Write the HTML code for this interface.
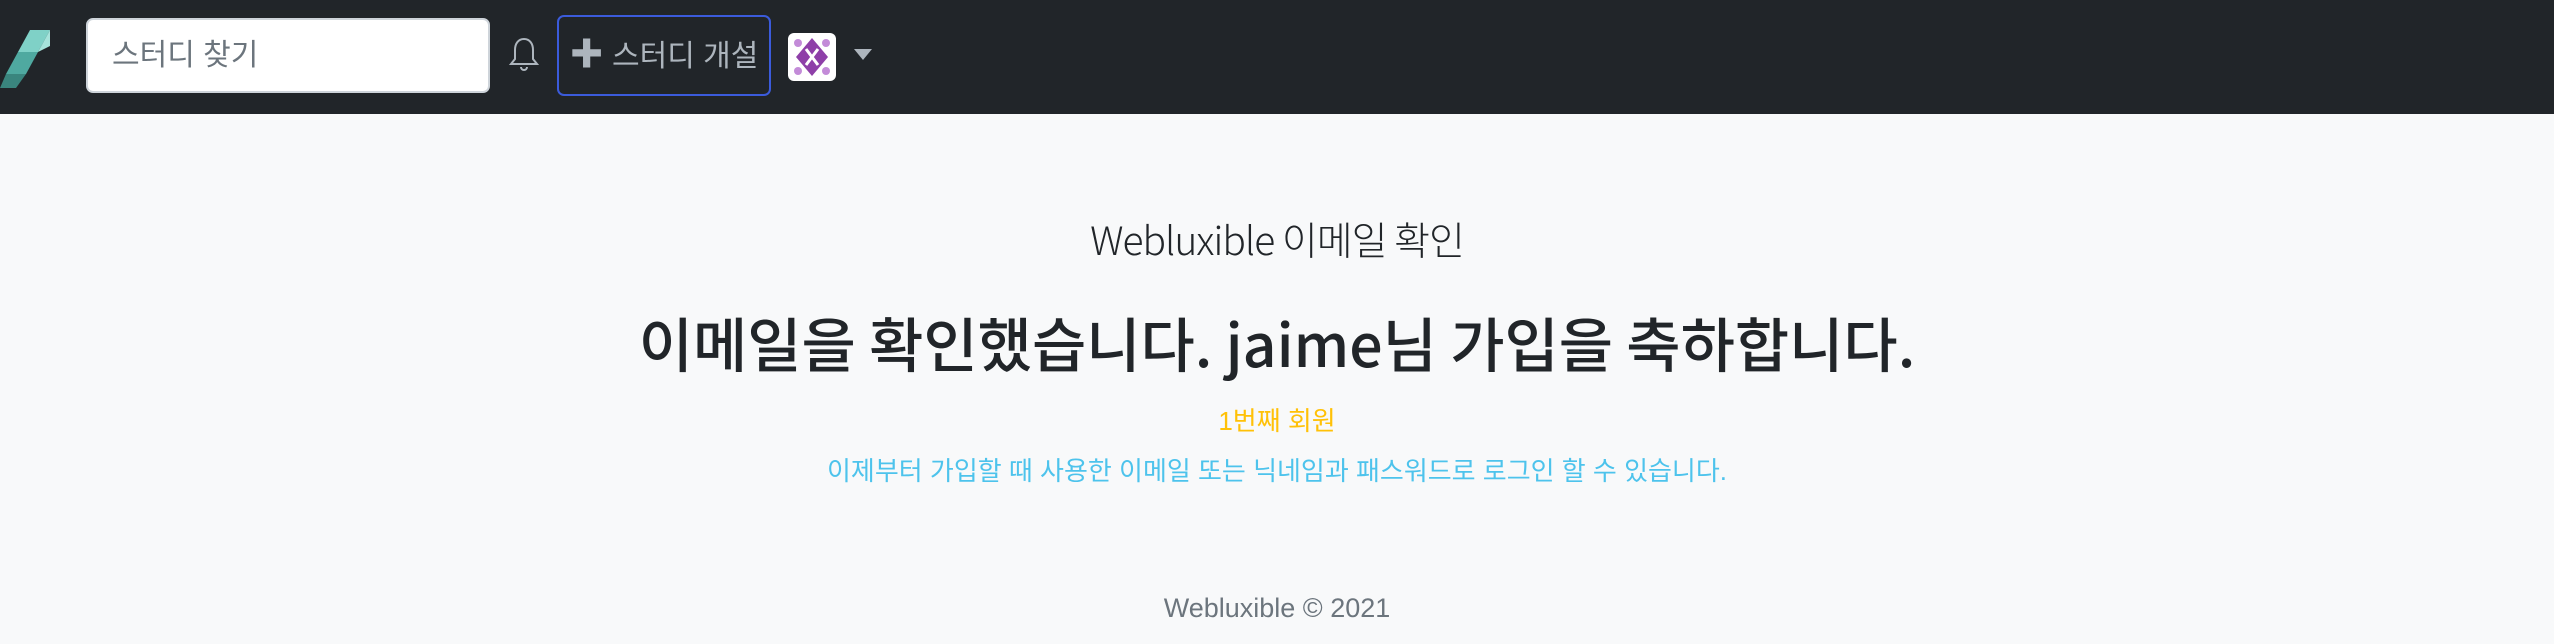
<!DOCTYPE html>
<html><head><meta charset="utf-8"><style>
body{margin:0;width:2554px;height:644px;background:#f8f9fa;font-family:"Liberation Sans","Noto Sans CJK KR",sans-serif;overflow:hidden;position:relative}
.nav{position:absolute;left:0;top:0;width:2554px;height:114px;background:#212529}
.inp{position:absolute;left:86px;top:18px;width:404px;height:75px;background:#fff;border:2px solid #ced4da;border-radius:7px;box-sizing:border-box;font-size:30px;color:#6c757d;line-height:71px;padding-left:24px}
.btn{position:absolute;left:557px;top:15px;width:214px;height:81px;border:2px solid #3b5bdb;border-radius:7px;box-sizing:border-box;color:#adb5bd;font-size:30px;line-height:77px;text-align:center}
.c{position:absolute;left:0;width:2554px;text-align:center;white-space:nowrap}
</style></head><body>
<div class="nav">
<svg style="position:absolute;left:0;top:26px" width="52" height="62" viewBox="0 0 52 62">
<polygon points="30,4 50,4 38,26 18,26" fill="#7fd1c7"/><polygon points="18,26 38,26 26,48 6,48" fill="#4fa9a0"/><polygon points="6,48 26,48 16,62 0,62" fill="#3a857e"/><polygon points="38,26 50,4 50,20" fill="#a6e3db"/>
</svg>
<div class="inp">스터디 찾기</div>
<svg style="position:absolute;left:509px;top:36px" width="30" height="38" viewBox="0 0 30 38"><path d="M15 3c-6 0-9 5-9 11v9l-4 5h26l-4-5v-9c0-6-3-11-9-11z M12 31a3 3 0 0 0 6 0" fill="none" stroke="#adb5bd" stroke-width="2"/></svg>
<div class="btn"><b style="font-size:34px">✚</b> 스터디 개설</div>
<svg style="position:absolute;left:788px;top:33px" width="48" height="48" viewBox="0 0 48 48"><rect width="48" height="48" rx="6" fill="#fff"/><polygon points="24,5 40,24 24,43 8,24" fill="#8e3fa8"/><circle cx="10" cy="10" r="4" fill="#c38bd8"/><circle cx="38" cy="10" r="4" fill="#c38bd8"/><circle cx="10" cy="38" r="4" fill="#c38bd8"/><circle cx="38" cy="38" r="4" fill="#c38bd8"/><path d="M18 16l12 16M30 16l-12 16" stroke="#fff" stroke-width="3"/></svg>
<svg style="position:absolute;left:854px;top:49px" width="18" height="12"><polygon points="0,0 18,0 9,11" fill="#adb5bd"/></svg>
</div>
<div class="c" style="top:211px;font-size:39px;font-weight:300;color:#212529;font-family:'Noto Sans CJK KR','Liberation Sans',sans-serif;letter-spacing:-1px">Webluxible 이메일 확인</div>
<div class="c" style="top:299px;font-size:59px;font-weight:500;color:#212529;font-family:'Noto Sans CJK KR','Liberation Sans',sans-serif;letter-spacing:0px">이메일을 확인했습니다. jaime님 가입을 축하합니다.</div>
<div class="c" style="top:401px;font-size:26px;color:#ffc107">1번째 회원</div>
<div class="c" style="top:451px;font-size:26px;color:#4dc3ec">이제부터 가입할 때 사용한 이메일 또는 닉네임과 패스워드로 로그인 할 수 있습니다.</div>
<div class="c" style="top:593px;font-size:27px;color:#6c757d">Webluxible © 2021</div>
</body></html>
